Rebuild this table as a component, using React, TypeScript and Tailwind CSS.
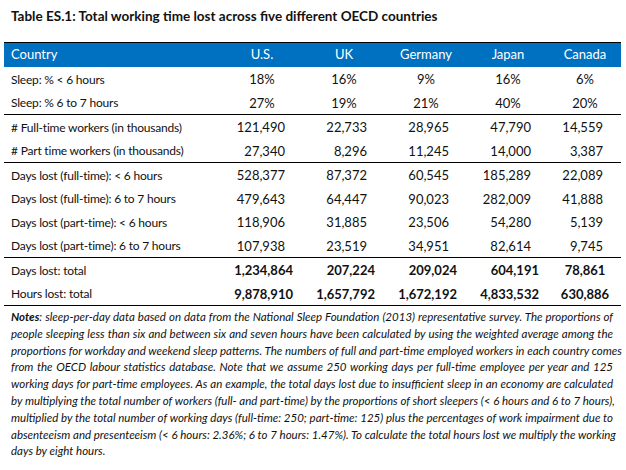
import React from "react";

type Row = { label: string; vals: string[] };

const sections: { kind: "pct" | "num" | "bold"; rows: Row[] }[] = [
  {
    kind: "pct",
    rows: [
      { label: "Sleep: % < 6 hours", vals: ["18%", "16%", "9%", "16%", "6%"] },
      { label: "Sleep: % 6 to 7 hours", vals: ["27%", "19%", "21%", "40%", "20%"] },
    ],
  },
  {
    kind: "num",
    rows: [
      { label: "# Full-time workers (in thousands)", vals: ["121,490", "22,733", "28,965", "47,790", "14,559"] },
      { label: "# Part time workers (in thousands)", vals: ["27,340", "8,296", "11,245", "14,000", "3,387"] },
    ],
  },
  {
    kind: "num",
    rows: [
      { label: "Days lost (full-time): < 6 hours", vals: ["528,377", "87,372", "60,545", "185,289", "22,089"] },
      { label: "Days lost (full-time): 6 to 7 hours", vals: ["479,643", "64,447", "90,023", "282,009", "41,888"] },
      { label: "Days lost (part-time): < 6 hours", vals: ["118,906", "31,885", "23,506", "54,280", "5,139"] },
      { label: "Days lost (part-time): 6 to 7 hours", vals: ["107,938", "23,519", "34,951", "82,614", "9,745"] },
    ],
  },
  {
    kind: "bold",
    rows: [
      { label: "Days lost: total", vals: ["1,234,864", "207,224", "209,024", "604,191", "78,861"] },
      { label: "Hours lost: total", vals: ["9,878,910", "1,657,792", "1,672,192", "4,833,532", "630,886"] },
    ],
  },
];

const grid = "grid grid-cols-[217px_82px_82px_82px_82px_72px]";

function cellClass(kind: string, i: number) {
  if (kind === "pct") return "text-center";
  if (kind === "num") return "text-right pr-[18px]";
  if (i === 4) return "text-center font-bold";
  return "text-right pr-[10px] font-bold";
}

const noteLines: React.ReactNode[] = [
  <>
    <span className="font-bold">Notes</span>: sleep-per-day data based on data from the National Sleep Foundation (2013) representative survey. The proportions of
  </>,
  "people sleeping less than six and between six and seven hours have been calculated by using the weighted average among the",
  "proportions for workday and weekend sleep patterns. The numbers of full and part-time employed workers in each country comes",
  "from the OECD labour statistics database. Note that we assume 250 working days per full-time employee per year and 125",
  "working days for part-time employees. As an example, the total days lost due to insufficient sleep in an economy are calculated",
  "by multiplying the total number of workers (full- and part-time) by the proportions of short sleepers (< 6 hours and 6 to 7 hours),",
  "multiplied by the total number of working days (full-time: 250; part-time: 125) plus the percentages of work impairment due to",
  "absenteeism and presenteeism (< 6 hours: 2.36%; 6 to 7 hours: 1.47%). To calculate the total hours lost we multiply the working",
];

export default function App() {
  return (
    <div className="w-[626px] h-[470px] bg-white text-[#111] overflow-hidden font-['Lato',sans-serif]">
      <div className="pl-[11px] pt-[7px] h-[42px] text-[13.5px] font-bold leading-[18px]">
        Table ES.1: Total working time lost across five different OECD countries
      </div>
      <div className="mx-[4px] w-[617px]">
        <div className={`${grid} border-t border-black bg-[#0070c0] text-white text-[13px] h-[25px] items-center`}>
          <div className="pl-[7px]">Country</div>
          <div className="text-center">U.S.</div>
          <div className="text-center">UK</div>
          <div className="text-center">Germany</div>
          <div className="text-center">Japan</div>
          <div className="text-center">Canada</div>
        </div>
        {sections.map((s, si) => (
          <div key={si} className="border-b border-black text-[13px] tabular-nums">
            {s.rows.map((r) => (
              <div key={r.label} className={`${grid} h-[23.5px] pt-[2px] items-center`}>
                <div className="pl-[7px] whitespace-nowrap text-[12px] tracking-[-0.2px]">{r.label}</div>
                {r.vals.map((v, i) => (
                  <div key={i} className={cellClass(s.kind, i)}>
                    {v}
                  </div>
                ))}
              </div>
            ))}
          </div>
        ))}
        <div className="pl-[7px] pr-[8px] pt-[3px] italic text-[11.5px] leading-[16.8px]">
          {noteLines.map((l, i) => (
            <div key={i} className="text-justify [text-align-last:justify] whitespace-nowrap">
              {l}
            </div>
          ))}
          <div>days by eight hours.</div>
        </div>
      </div>
    </div>
  );
}
